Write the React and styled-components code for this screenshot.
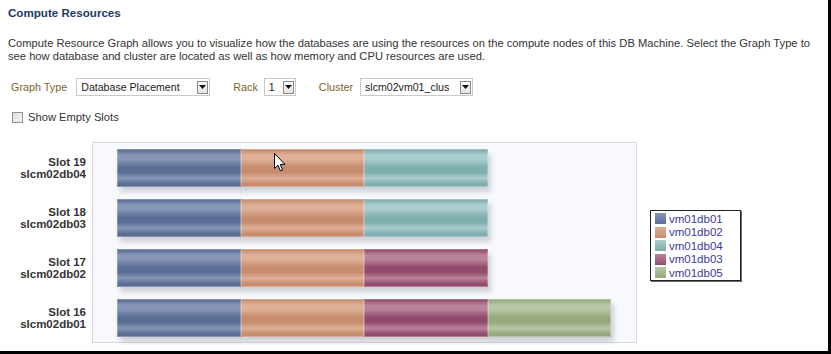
import React from "react";
import styled, { createGlobalStyle } from "styled-components";

const GlobalStyle = createGlobalStyle`
  body {
    margin: 0;
    background: #fff;
    font-family: "Liberation Sans", Arial, sans-serif;
  }
`;

// base colour + light band colour for each database
const DB_COLORS = {
  vm01db01: { base: "#5a6d95", light: "#8796b6" },
  vm01db02: { base: "#c78c6d", light: "#ddb097" },
  vm01db04: { base: "#7faeae", light: "#abcdcd" },
  vm01db03: { base: "#934b6b", light: "#b9849b" },
  vm01db05: { base: "#95a97d", light: "#b8c7a5" }
};

const LEGEND = ["vm01db01", "vm01db02", "vm01db04", "vm01db03", "vm01db05"];

const SLOTS = [
  { slot: "Slot 19", host: "slcm02db04", dbs: ["vm01db01", "vm01db02", "vm01db04"] },
  { slot: "Slot 18", host: "slcm02db03", dbs: ["vm01db01", "vm01db02", "vm01db04"] },
  { slot: "Slot 17", host: "slcm02db02", dbs: ["vm01db01", "vm01db02", "vm01db03"] },
  { slot: "Slot 16", host: "slcm02db01", dbs: ["vm01db01", "vm01db02", "vm01db03", "vm01db05"] }
];

const DropButton = () => (
  <ArrowBox>
    <svg width="7" height="4" viewBox="0 0 7 4">
      <path d="M0 0h7L3.5 4z" fill="#111" />
    </svg>
  </ArrowBox>
);

const Select = ({ value, width }) => (
  <SelectBox $width={width}>
    <SelectText>{value}</SelectText>
    <DropButton />
  </SelectBox>
);

const Cursor = () => (
  <CursorMark width="12" height="19" viewBox="0 0 12 19">
    <path
      d="M0.5 0.5 L0.5 15.5 L4 12.2 L6.4 17.8 L8.6 16.9 L6.3 11.4 L11 11.4 Z"
      fill="#fff"
      stroke="#000"
      strokeWidth="1"
      strokeLinejoin="miter"
    />
  </CursorMark>
);

const App = () => {
  return (
    <Page>
      <GlobalStyle />
      <Title>Compute Resources</Title>
      <Intro>
        Compute Resource Graph allows you to visualize how the databases are using the
        resources on the compute nodes of this DB Machine. Select the Graph Type to
        <br />
        see how database and cluster are located as well as how memory and CPU resources
        are used.
      </Intro>

      <Controls>
        <FieldLabel $gap={9}>Graph Type</FieldLabel>
        <Select value="Database Placement" width={134} />
        <FieldLabel $left={23} $gap={6}>Rack</FieldLabel>
        <Select value="1" width={32} />
        <FieldLabel $left={23} $gap={7}>Cluster</FieldLabel>
        <Select value="slcm02vm01_clus" width={113} />
      </Controls>

      <CheckRow>
        <CheckBox />
        <span>Show Empty Slots</span>
      </CheckRow>

      <Chart>
        <SlotLabels>
          {SLOTS.map(s => (
            <SlotLabel key={s.slot}>
              <div>{s.slot}</div>
              <div>{s.host}</div>
            </SlotLabel>
          ))}
        </SlotLabels>

        <Plot>
          {SLOTS.map(s => (
            <Bar key={s.slot}>
              {s.dbs.map(db => (
                <Segment key={db} $base={DB_COLORS[db].base} $light={DB_COLORS[db].light} />
              ))}
            </Bar>
          ))}
          <Cursor />
        </Plot>

        <Legend>
          {LEGEND.map(db => (
            <LegendItem key={db}>
              <Swatch $base={DB_COLORS[db].base} $light={DB_COLORS[db].light} />
              {db}
            </LegendItem>
          ))}
        </Legend>
      </Chart>
    </Page>
  );
};

const Page = styled.div`
  box-sizing: border-box;
  width: 831px;
  height: 354px;
  padding: 6px 0 0 8px;
  border-right: 3px solid #000;
  border-bottom: 3px solid #000;
  overflow: hidden;
  color: #333;
  font-size: 11px;
`;

const Title = styled.h1`
  margin: 0;
  font-size: 11.6px;
  line-height: 14px;
  font-weight: bold;
  color: #213a5f;
`;

const Intro = styled.p`
  margin: 17px 0 0;
  font-size: 11.2px;
  line-height: 13px;
  color: #333;
  white-space: nowrap;
`;

const Controls = styled.div`
  display: flex;
  align-items: center;
  height: 18px;
  margin-top: 15px;
  padding-left: 3px;
`;

const FieldLabel = styled.span`
  font-size: 10.8px;
  color: #7f612a;
  margin-left: ${p => p.$left || 0}px;
  margin-right: ${p => p.$gap}px;
`;

const SelectBox = styled.div`
  box-sizing: border-box;
  width: ${p => p.$width}px;
  height: 18px;
  display: flex;
  align-items: center;
  justify-content: space-between;
  padding: 0 1px 0 4px;
  border: 1px solid #c9c9c9;
  background: #fff;
`;

const SelectText = styled.span`
  font-size: 10.6px;
  color: #222;
  white-space: nowrap;
`;

const ArrowBox = styled.div`
  box-sizing: border-box;
  width: 11px;
  height: 13px;
  display: flex;
  align-items: center;
  justify-content: center;
  border: 1px solid #8a8a8a;
  background: linear-gradient(#fbfbfb, #e4e4e4);
`;

const CheckRow = styled.label`
  display: flex;
  align-items: center;
  gap: 5px;
  height: 14px;
  margin-top: 14px;
  padding-left: 4px;
  font-size: 11.2px;
  color: #333;
`;

const CheckBox = styled.span`
  box-sizing: border-box;
  width: 11px;
  height: 11px;
  border: 1px solid #8f8f8f;
  background: linear-gradient(135deg, #dcdcdc, #f7f7f7);
`;

const Chart = styled.div`
  display: flex;
  align-items: flex-start;
  margin-top: 18px;
`;

const SlotLabels = styled.div`
  width: 78px;
  padding-top: 7px;
  margin-right: 6px;
`;

const SlotLabel = styled.div`
  height: 38px;
  margin-bottom: 12px;
  display: flex;
  flex-direction: column;
  justify-content: center;
  align-items: flex-end;
  font-size: 11.5px;
  line-height: 12px;
  font-weight: bold;
  color: #333;
`;

const Plot = styled.div`
  position: relative;
  box-sizing: border-box;
  width: 545px;
  height: 201px;
  padding: 6px 0 0 24px;
  border: 1px solid #d6dae4;
  background: #f8f9fc;
`;

const Bar = styled.div`
  display: flex;
  height: 38px;
  margin-bottom: 12px;
  box-shadow: 3px 5px 5px rgba(60, 70, 90, 0.22);
  width: fit-content;
`;

const gloss = (base, light) => `linear-gradient(
  to bottom,
  ${base} 0%,
  ${light} 14%,
  ${light} 26%,
  ${base} 48%,
  ${base} 62%,
  ${light} 78%,
  ${base} 94%,
  ${base} 100%
)`;

const Segment = styled.div`
  width: 123.5px;
  height: 100%;
  box-sizing: border-box;
  border: 1px solid rgba(255, 255, 255, 0.25);
  background: ${p => gloss(p.$base, p.$light)};
`;

const CursorMark = styled.svg`
  position: absolute;
  left: 181px;
  top: 10px;
`;

const Legend = styled.div`
  align-self: center;
  margin-left: 13px;
  padding: 1px 17px 1px 4px;
  border: 1px solid #222;
  box-shadow: 1px 1px 0 #666;
  background: #fff;
`;

const LegendItem = styled.div`
  display: flex;
  align-items: center;
  gap: 3px;
  height: 13.5px;
  font-size: 11.5px;
  color: #3a3a9c;
`;

const Swatch = styled.span`
  width: 11px;
  height: 11px;
  background: linear-gradient(${p => p.$light}, ${p => p.$base});
`;

export default App;
